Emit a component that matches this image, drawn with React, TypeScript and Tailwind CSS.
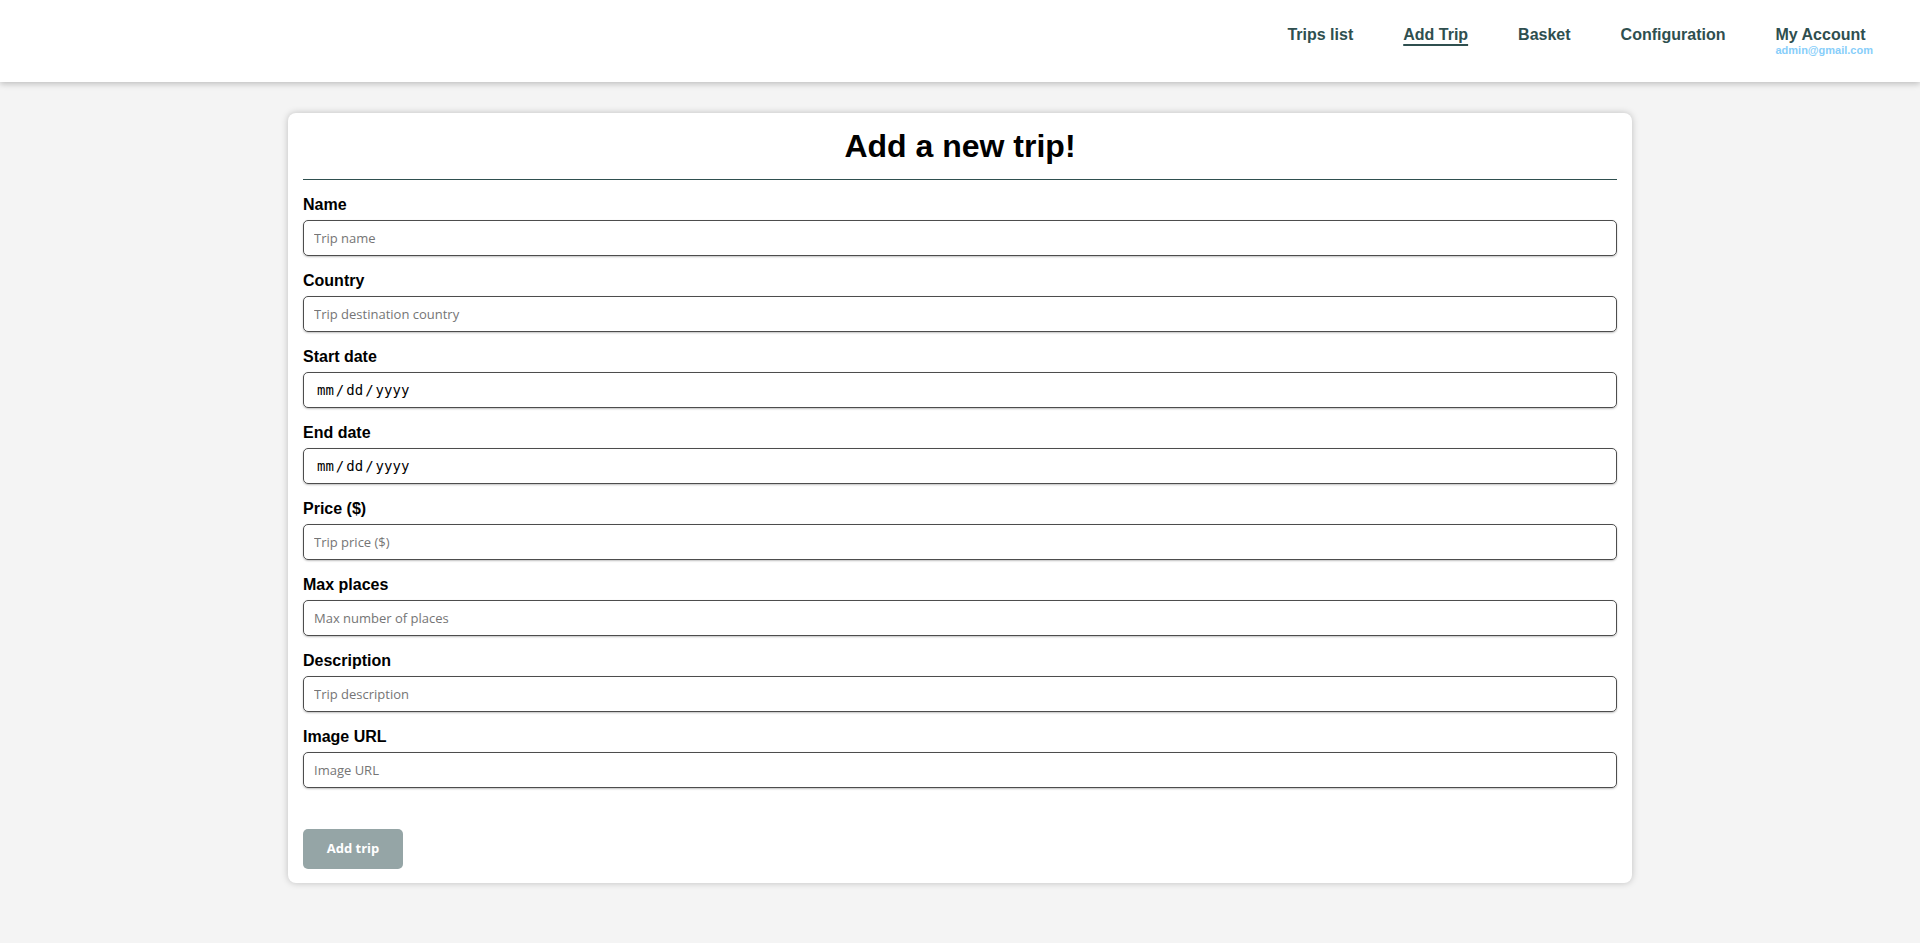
import { useState } from 'react';

const NAV = ['Trips list', 'Add Trip', 'Basket', 'Configuration'];

const FIELDS = [
  { id: 'name', label: 'Name', type: 'text', placeholder: 'Trip name' },
  { id: 'country', label: 'Country', type: 'text', placeholder: 'Trip destination country' },
  { id: 'start', label: 'Start date', type: 'date', placeholder: '' },
  { id: 'end', label: 'End date', type: 'date', placeholder: '' },
  { id: 'price', label: 'Price ($)', type: 'number', placeholder: 'Trip price ($)' },
  { id: 'places', label: 'Max places', type: 'number', placeholder: 'Max number of places' },
  { id: 'description', label: 'Description', type: 'text', placeholder: 'Trip description' },
  { id: 'image', label: 'Image URL', type: 'text', placeholder: 'Image URL' },
];

function Header() {
  return (
    <header className="h-[82px] bg-white shadow-[0_2px_6px_rgba(0,0,0,0.22)] relative z-10 flex justify-end pr-[47px]">
      <nav className="flex items-start gap-[50px] pt-[26px] text-[16px] font-bold text-[#2f4f4f] leading-[18px]">
        {NAV.map((item) => (
          <a
            key={item}
            href="#"
            className={item === 'Add Trip' ? 'underline decoration-2 underline-offset-[4px]' : 'no-underline'}
          >
            {item}
          </a>
        ))}
        <a href="#" className="flex flex-col">
          <span>My Account</span>
          <span className="text-[11px] leading-[13px] text-[#87cefa]">admin@gmail.com</span>
        </a>
      </nav>
    </header>
  );
}

export default function App() {
  const [values, setValues] = useState<Record<string, string>>({});

  return (
    <div className="min-h-screen bg-[#f4f4f4]" style={{ fontFamily: "'Liberation Sans', Arial, sans-serif" }}>
      <Header />
      <main className="pt-[31px] pb-[61px] flex justify-center">
        <form
          className="w-[1344px] bg-white rounded-[8px] shadow-[0_0_7px_rgba(0,0,0,0.22)] px-[15px] pb-[14px]"
          onSubmit={(e) => e.preventDefault()}
        >
          <h1 className="text-[32px] font-bold text-black text-center leading-[37px] pt-[15px] pb-[14px] border-b border-[#2f4f4f]">
            Add a new trip!
          </h1>

          {FIELDS.map((f) => (
            <div key={f.id} className="mt-[16px] flex flex-col">
              <label htmlFor={f.id} className="text-[16px] font-bold text-black leading-[18px] mb-[6px]">
                {f.label}
              </label>
              <input
                id={f.id}
                type={f.type}
                placeholder={f.placeholder}
                value={values[f.id] ?? ''}
                onChange={(e) => setValues({ ...values, [f.id]: e.target.value })}
                className={
                  'h-[36px] w-full rounded-[5px] border border-[#4d4d4d] shadow-[0_1px_2px_rgba(0,0,0,0.25)] outline-none text-black placeholder:text-[#757575] [&::-webkit-calendar-picker-indicator]:hidden [&::-webkit-inner-spin-button]:appearance-none ' +
                  (f.type === 'date'
                    ? "pl-[12px] pr-[10px] text-[14px] font-['DejaVu_Sans_Mono',monospace] [&::-webkit-datetime-edit-text]:px-[1px]"
                    : "px-[10px] text-[13px] font-['Open_Sans',sans-serif]")
                }
              />
            </div>
          ))}

          <button
            type="submit"
            className="mt-[41px] w-[100px] h-[40px] rounded-[5px] bg-[#95a5a6] text-white text-[13px] font-bold font-['Open_Sans',sans-serif]"
          >
            Add trip
          </button>
        </form>
      </main>
    </div>
  );
}
